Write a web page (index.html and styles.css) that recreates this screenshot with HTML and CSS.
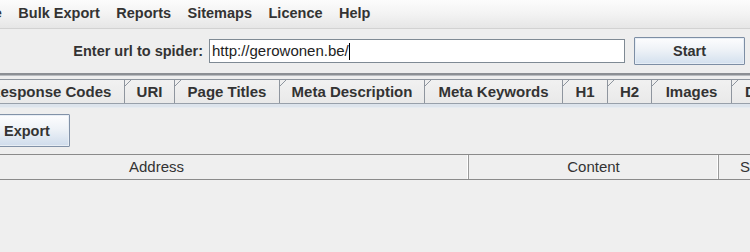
FILE: index.html
```html
<!DOCTYPE html>
<html>
<head>
<meta charset="utf-8">
<link rel="stylesheet" href="styles.css">
</head>
<body>
<div class="app">
  <div class="menubar">
    <span class="menu first">Mode</span>
    <span class="menu">Bulk Export</span>
    <span class="menu">Reports</span>
    <span class="menu">Sitemaps</span>
    <span class="menu">Licence</span>
    <span class="menu">Help</span>
  </div>
  <div class="urlrow">
    <label class="urllabel">Enter url to spider:</label>
    <div class="urlinput">http://gerowonen.be/<span class="caret"></span></div>
    <button class="startbtn">Start</button>
  </div>
  <div class="divider"></div>
  <div class="tabs">
    <div class="tab t-resp">Response Codes</div>
    <div class="tab t-uri">URI</div>
    <div class="tab t-titles">Page Titles</div>
    <div class="tab t-desc">Meta Description</div>
    <div class="tab t-kw">Meta Keywords</div>
    <div class="tab t-h1">H1</div>
    <div class="tab t-h2">H2</div>
    <div class="tab t-img">Images</div>
    <div class="tab t-dir">Directives</div>
  </div>
  <div class="tabband"></div>
  <div class="toolbar">
    <button class="exportbtn">Export</button>
  </div>
  <div class="tablehead">
    <div class="col address">Address</div>
    <div class="col content">Content</div>
    <div class="col status">Status Code</div>
  </div>
  <div class="tablebody"></div>
</div>
</body>
</html>
```
FILE: styles.css
```css
* { box-sizing: border-box; }
html, body { margin: 0; padding: 0; }
body {
  width: 750px;
  height: 252px;
  overflow: hidden;
  background: #eeeeee;
  font-family: "Liberation Sans", Arial, sans-serif;
  color: #333333;
}
.app { width: 750px; overflow: hidden; }

.menubar {
  height: 29px;
  display: flex;
  align-items: center;
  gap: 16.5px;
  background: linear-gradient(#fcfcfc, #f3f3f3 50%, #e6e6e6);
  border-bottom: 1px solid #d2d2d2;
  white-space: nowrap;
  padding-bottom: 2px;
}
.menu {
  font-weight: bold;
  font-size: 14.5px;
  color: #333;
}
.menu.first { margin-left: -36px; }

.urlrow {
  height: 44px;
  display: flex;
  align-items: center;
  justify-content: flex-end;
  padding-right: 5px;
}
.urllabel {
  font-weight: bold;
  font-size: 14.5px;
  color: #333;
  margin-right: 6px;
}
.urlinput {
  width: 416px;
  height: 24px;
  background: #fff;
  border: 1px solid #7f8a94;
  font-size: 15px;
  line-height: 22px;
  padding-left: 2px;
  color: #222;
  display: flex;
  align-items: center;
}
.caret {
  display: inline-block;
  width: 1px;
  height: 17px;
  background: #000;
}
.startbtn {
  margin-left: 9px;
  width: 111px;
  height: 28px;
  border: 1px solid #7d8ea4;
  border-radius: 1px;
  background: linear-gradient(#fdfdfe, #eef2f7 45%, #d3e0ee);
  box-shadow: inset 0 0 0 1px #e6edf5;
  font-family: "Liberation Sans", Arial, sans-serif;
  font-weight: bold;
  font-size: 14.5px;
  color: #333;
  padding: 0;
}

.divider {
  height: 3px;
  background: #8c8f94;
  border-bottom: 1px solid #b9bcc0;
}

.tabs {
  margin-top: 3px;
  height: 25px;
  display: flex;
  white-space: nowrap;
  border-bottom: 1px solid #98a0aa;
}
.tab {
  position: relative;
  flex: none;
  height: 24px;
  border-top: 1px solid #8e959e;
  border-left: 1px solid #8e959e;
  background: linear-gradient(#f1f1f1, #e9e9e9);
  padding: 0;
  text-align: center;
  font-weight: bold;
  font-size: 15px;
  line-height: 23px;
  color: #333;
  overflow: hidden;
}
.tab::before {
  content: "";
  position: absolute;
  left: -1px;
  top: -1px;
  width: 8px;
  height: 8px;
  background: linear-gradient(135deg, #eeeeee 0 44%, #8e959e 44% 56%, transparent 56%);
}
.t-resp { width: 148px; margin-left: -24px; }
.t-uri { width: 50px; }
.t-titles { width: 105px; }
.t-desc { width: 145px; }
.t-kw { width: 138px; }
.t-h1 { width: 45px; }
.t-h2 { width: 44px; }
.t-img { width: 80px; }
.t-dir { width: 100px; text-align: left; padding-left: 13px; }

.tabband {
  height: 4px;
  background: #dde4ec;
  border-bottom: 1px solid #e6ebf0;
}

.toolbar {
  height: 46px;
  display: flex;
  align-items: flex-start;
  padding-top: 6px;
}
.exportbtn {
  margin-left: -16px;
  width: 86px;
  height: 33px;
  border: 1px solid #8292a8;
  border-radius: 1px;
  background: linear-gradient(#fdfdfe, #eef2f7 45%, #cfdcec);
  box-shadow: inset 0 0 0 1px #e8eef5;
  font-family: "Liberation Sans", Arial, sans-serif;
  font-weight: bold;
  font-size: 14.5px;
  color: #333;
  padding: 0;
}

.tablehead {
  height: 26px;
  display: flex;
  border-top: 1px solid #8a8a8a;
  border-bottom: 1px solid #8a8a8a;
  background: #efefef;
  white-space: nowrap;
}
.col {
  flex: none;
  font-size: 15px;
  line-height: 24px;
  color: #333;
  text-align: center;
  border-right: 1px solid #9a9a9a;
  box-shadow: inset -1px 0 0 #ffffff;
}
.col.address { width: 624px; margin-left: -155px; }
.col.content { width: 250px; }
.col.status { width: 60px; text-align: left; padding-left: 21px; border-right: none; box-shadow: none; }

.tablebody {
  height: 80px;
  background: #efefef;
}
```
